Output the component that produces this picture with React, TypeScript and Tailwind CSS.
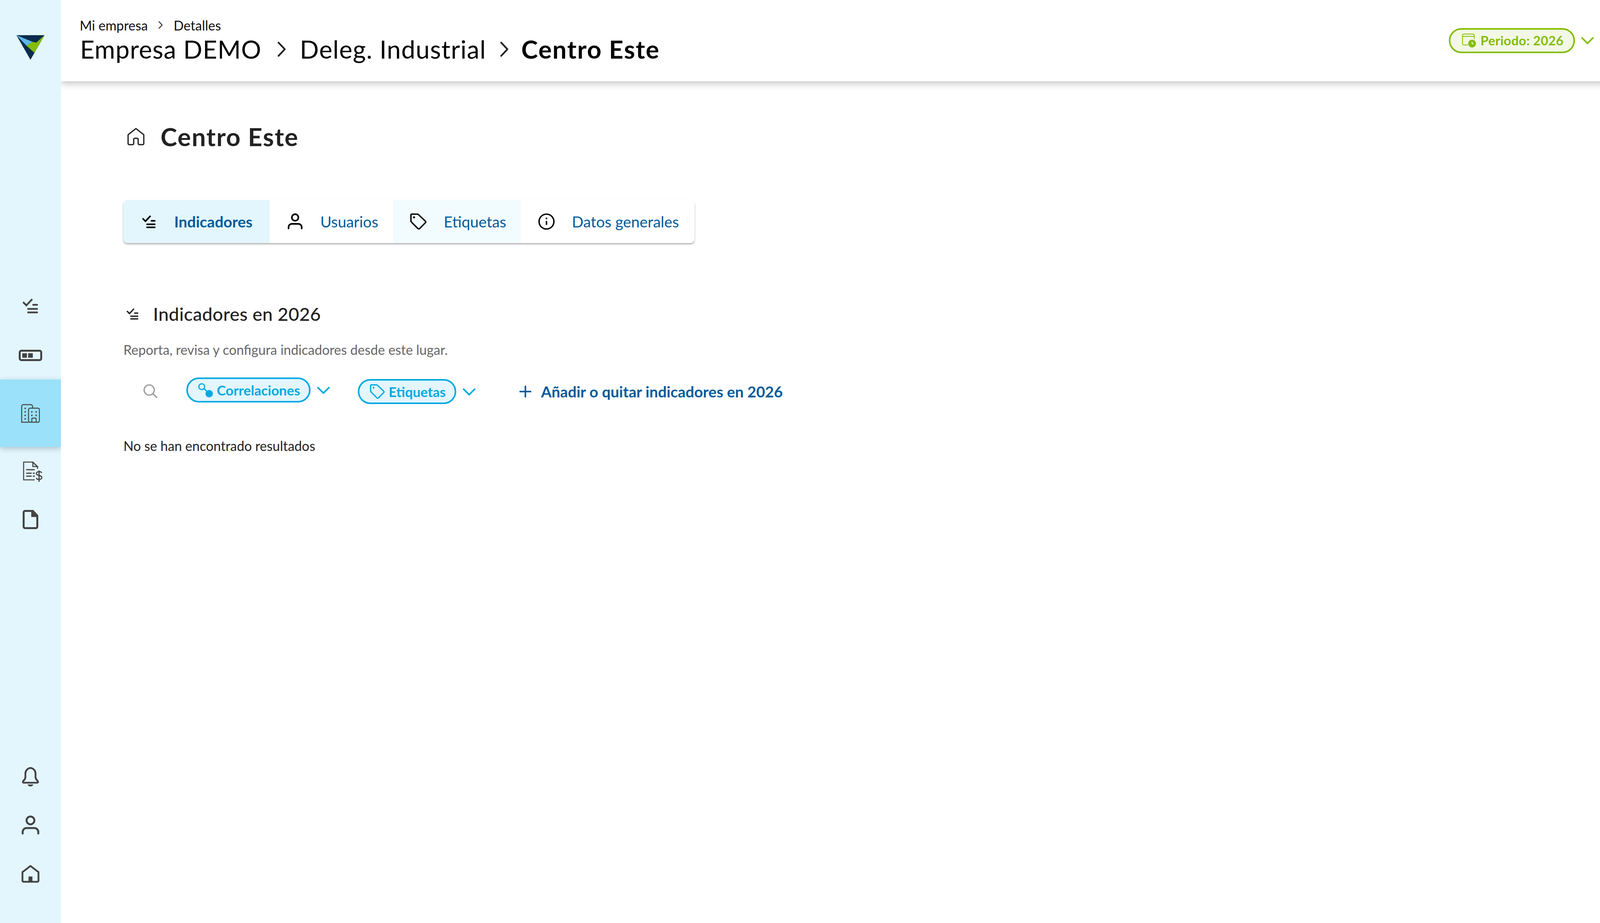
import type { ReactNode } from "react";

type IconProps = { className?: string };

const ChecklistIcon = ({ className }: IconProps) => (
  <svg viewBox="0 0 40 38" className={className} fill="none" stroke="currentColor" strokeWidth="4.6">
    <path d="M1 9l8.500 8.500L24.500 1.500" />
    <path d="M27 16h10M14 26.500h23M14 35.500h23" strokeLinecap="round" />
  </svg>
);

const UserIcon = ({ className }: IconProps) => (
  <svg viewBox="0 0 46 50" className={className} fill="none" stroke="currentColor" strokeWidth="5" strokeLinecap="round">
    <circle cx="23" cy="12.5" r="10" />
    <path d="M3 46v-4a10 10 0 0 1 10-10h20a10 10 0 0 1 10 10v4" />
  </svg>
);

const TagIcon = ({ className }: IconProps) => (
  <svg viewBox="0 0 42 42" className={className} fill="none" stroke="currentColor" strokeWidth="3.6" strokeLinejoin="round">
    <path d="M4 2h15a3 3 0 0 1 2 1l18 17a3 3 0 0 1 0 4L24 39a3 3 0 0 1-4 0L3 22a3 3 0 0 1-1-2V4a2 2 0 0 1 2-2z" />
    <circle cx="10" cy="10" r="2.6" fill="currentColor" stroke="none" />
  </svg>
);

const InfoIcon = ({ className }: IconProps) => (
  <svg viewBox="0 0 42 42" className={className} fill="none" stroke="currentColor" strokeWidth="3.6">
    <circle cx="21" cy="21" r="19" />
    <path d="M21 19.500v10" />
    <circle cx="21" cy="13" r="2.300" fill="currentColor" stroke="none" />
  </svg>
);

const ChevronDown = ({ className }: IconProps) => (
  <svg viewBox="0 0 32 18" className={className} fill="none" stroke="currentColor" strokeWidth="4" strokeLinecap="round" strokeLinejoin="round">
    <path d="M2 2l14 14L30 2" />
  </svg>
);

const ChevronRight = ({ className }: IconProps) => (
  <svg viewBox="0 0 24 40" className={className} fill="none" stroke="currentColor" strokeWidth="4.4" strokeLinecap="round" strokeLinejoin="round">
    <path d="M4 3l16 17L4 37" />
  </svg>
);

const Logo = () => (
  <svg viewBox="0 0 72 63" className="h-[63px] w-[72px]">
    <path d="M0 0h72L36 63z" fill="#0a2d4d" />
    <path d="M0 0l41 17-15 10z" fill="#5cb8e8" />
    <path d="M72 0L51 19l-10-2-15 10 20 18z" fill="#84bd00" />
  </svg>
);

const BarIcon = () => (
  <svg viewBox="0 0 60 29" className="h-[29px] w-[60px]" fill="none">
    <rect x="2.500" y="2.500" width="55" height="24" rx="4" stroke="#444" strokeWidth="5" />
    <path d="M9 9h12v11.500H9zM24 9h12v11.500H24z" fill="#444" />
  </svg>
);

const BuildingIcon = () => (
  <svg viewBox="0 0 48 48" className="h-[48px] w-[48px]" fill="none" stroke="#444" strokeWidth="2.400">
    <path d="M19 46.500H1.500V6A4.500 4.500 0 0 1 6 1.500h18.500A5 5 0 0 1 29.500 7v4" />
    <rect x="19" y="10.500" width="28" height="36" rx="4" />
    <path d="M27.500 46v-8a2 2 0 0 1 2-2h7a2 2 0 0 1 2 2v8" />
    <g fill="#444" stroke="none">
      <circle cx="10.500" cy="11" r="2" />
      <circle cx="10.500" cy="20" r="2" />
      <circle cx="10.500" cy="29" r="2" />
      <circle cx="10.500" cy="38" r="2" />
      <circle cx="27.500" cy="20" r="2" />
      <circle cx="38.500" cy="20" r="2" />
      <circle cx="27.500" cy="29" r="2" />
      <circle cx="38.500" cy="29" r="2" />
    </g>
  </svg>
);

const InvoiceIcon = () => (
  <svg viewBox="0 0 50 52" className="h-[52px] w-[50px]" fill="none" stroke="#444" strokeWidth="2.600">
    <path d="M30 47H1.500V1.500H25L37 13v6" />
    <path d="M25 1.500V13h12z" fill="#444" fillOpacity="0.15" />
    <path d="M8 21h22M8 30h14M25 30h5M8 37.500h14M25 37.500h5" strokeWidth="3" />
    <path d="M48 29c-1-2-3-3-7-3-4 0-7 2-7 5 0 6 14 3 14 10 0 3-3 5-7 5-4 0-6-1-7-4M41 23v29" strokeWidth="3" />
  </svg>
);

const FileIcon = () => (
  <svg viewBox="0 0 40 49" className="h-[49px] w-[40px]" fill="none" stroke="#444" strokeWidth="5" strokeLinejoin="round">
    <path d="M26 2.500H6A3.500 3.500 0 0 0 2.500 6v37A3.500 3.500 0 0 0 6 46.500h28a3.500 3.500 0 0 0 3.500-3.500V15z" />
    <path d="M22 0h5l13 14v4H22z" fill="#444" stroke="none" />
  </svg>
);

const BellIcon = () => (
  <svg viewBox="0 0 46 50" className="h-[50px] w-[46px]" fill="none" stroke="#444" strokeWidth="4.600" strokeLinejoin="round">
    <path d="M23 2c-8 1.500-13 7-13 15v9c0 3-1 5-4 8-3 2-3.500 6 0 6h34c3.500 0 3-4 0-6-3-3-4-5-4-8v-9C36 9 31 3.500 23 2z" />
    <path d="M15.500 44.500h15c-1 3-4 5-7.500 5s-6.500-2-7.500-5z" fill="#444" stroke="none" />
  </svg>
);

const HomeFilledIcon = ({ className }: IconProps) => (
  <svg viewBox="0 0 46 46" className={className} fill="none" stroke="#444" strokeWidth="4.600" strokeLinejoin="round">
    <path d="M23 3L5 17a3 3 0 0 0-2.500 3v20a3 3 0 0 0 3 3.500h35a3 3 0 0 0 3-3.500V20A3 3 0 0 0 41 17z" />
    <path d="M18 30h10v14H18z" fill="#444" stroke="none" />
  </svg>
);

const HomeOutlineIcon = ({ className }: IconProps) => (
  <svg viewBox="0 0 46 48" className={className} fill="none" stroke="currentColor" strokeWidth="3.400" strokeLinejoin="round">
    <path d="M23 2L4 17a3 3 0 0 0-2 3v22a3 3 0 0 0 3 3h9a3 3 0 0 0 3-3V31a3 3 0 0 1 3-3h6a3 3 0 0 1 3 3v11a3 3 0 0 0 3 3h9a3 3 0 0 0 3-3V20a3 3 0 0 0-2-3z" />
  </svg>
);

const SearchIcon = () => (
  <svg viewBox="0 0 38 38" className="h-[38px] w-[38px]" fill="none" stroke="#999" strokeWidth="3.200" strokeLinecap="round">
    <circle cx="16" cy="16" r="13" />
    <path d="M26 26l9 9" />
  </svg>
);

const CorrelationIcon = () => (
  <svg viewBox="0 0 38 37" className="h-[37px] w-[38px]" fill="none" stroke="#00a9e0" strokeWidth="3">
    <circle cx="9.500" cy="9.500" r="7.500" />
    <path d="M15 15l9 7" />
    <circle cx="28.500" cy="27.500" r="9.500" fill="#00a9e0" stroke="none" />
  </svg>
);

const PeriodIcon = () => (
  <svg viewBox="0 0 36 36" className="h-[36px] w-[36px]" fill="none" stroke="#84bd00" strokeWidth="2">
    <path d="M31 14V4.500A3.500 3.500 0 0 0 27.500 1H4.500A3.500 3.500 0 0 0 1 4.500v21A3.500 3.500 0 0 0 4.500 29H15M1 7h30" />
    <circle cx="25.500" cy="25.500" r="10" fill="#84bd00" stroke="none" />
    <path d="M25.500 20.500v5.500h4.500" stroke="#f2f7e6" />
  </svg>
);

const RailItem = ({ children, className }: { children: ReactNode; className: string }) => (
  <div className={`flex items-center justify-center ${className}`}>{children}</div>
);

interface TabProps {
  icon: ReactNode;
  label: string;
  className: string;
}

const Tab = ({ icon, label, className }: TabProps) => (
  <div className={`flex h-full items-center ${className}`}>
    {icon}
    <span>{label}</span>
  </div>
);

export default function App() {
  return (
    <div className="flex h-[2362px] w-[4132px] overflow-hidden bg-white font-['Lato',sans-serif] text-black">
      <aside className="relative z-10 flex h-full w-[156px] shrink-0 flex-col overflow-hidden bg-[#e3f6fe]">
        <RailItem className="mt-[90px] h-[63px]">
          <Logo />
        </RailItem>
        <RailItem className="mt-[611px] h-[38px]">
          <ChecklistIcon className="h-[38px] w-[40px] text-[#444]" />
        </RailItem>
        <RailItem className="mt-[93px] h-[29px]">
          <BarIcon />
        </RailItem>
        <RailItem className="mt-[47px] h-[173px] bg-[#9ae1f9] shadow-[0_4px_14px_rgba(0,0,0,0.22)]">
          <BuildingIcon />
        </RailItem>
        <RailItem className="mt-[37px] h-[52px] pl-[11px]">
          <InvoiceIcon />
        </RailItem>
        <RailItem className="mt-[72px] h-[49px]">
          <FileIcon />
        </RailItem>
        <div className="mt-auto flex flex-col items-center pb-[103px]">
          <BellIcon />
          <UserIcon className="mt-[74px] h-[50px] w-[46px] text-[#444]" />
          <HomeFilledIcon className="mt-[76px] h-[46px] w-[46px]" />
        </div>
      </aside>

      <main className="flex min-w-0 flex-1 flex-col">
        <header className="flex h-[208px] shrink-0 items-start justify-between bg-white pl-[49px] pr-[52px] shadow-[0_5px_18px_rgba(0,0,0,0.26)]">
          <div>
            <div className="ml-[-1px] mt-[42px] flex h-[44px] items-center text-[34px] text-[#111]">
              <span>Mi empresa</span>
              <ChevronRight className="ml-[27px] h-[20px] w-[12px] text-[#222]" />
              <span className="ml-[27px]">Detalles</span>
            </div>
            <div className="mt-[1px] flex h-[78px] items-center text-[64px] leading-none">
              <span className="tracking-[1px]">Empresa DEMO</span>
              <ChevronRight className="ml-[39px] h-[40px] w-[24px] text-[#222]" />
              <span className="ml-[35px] tracking-[1.2px]">Deleg. Industrial</span>
              <ChevronRight className="ml-[34px] h-[40px] w-[24px] text-[#222]" />
              <span className="ml-[32px] font-bold tracking-[2px]">Centro Este</span>
            </div>
          </div>
          <div className="mt-[72px] flex items-center">
            <div className="flex h-[64px] w-[323px] items-center rounded-full border-[4px] border-[#84bd00] bg-[#f2f7e6] pl-[30px] text-[33px] font-bold tracking-[0.4px] text-[#84bd00]">
              <PeriodIcon />
              <span className="ml-[11px]">Periodo: 2026</span>
            </div>
            <ChevronDown className="ml-[16px] h-[18px] w-[32px] text-[#84bd00]" />
          </div>
        </header>

        <section className="pl-[160px] pt-[110px]">
          <div className="flex h-[64px] items-center text-[64px] font-bold leading-none tracking-[1.9px] text-[#222]">
            <HomeOutlineIcon className="ml-[10px] h-[48px] w-[44px]" />
            <span className="ml-[41px]">Centro Este</span>
          </div>

          <div className="mt-[130px] flex h-[110px] w-[1462px] overflow-hidden rounded-[10px] bg-white text-[39px] text-[#005b9a] shadow-[0_3px_4px_rgba(0,0,0,0.32)]">
            <Tab
              className="w-[374px] bg-[#e3f6fe] pl-[48px] font-bold"
              icon={<ChecklistIcon className="mr-[47px] h-[33px] w-[35px] text-black" />}
              label="Indicadores"
            />
            <Tab
              className="w-[316px] pl-[46px]"
              icon={<UserIcon className="mr-[45px] h-[42px] w-[39px] text-black" />}
              label="Usuarios"
            />
            <Tab
              className="w-[327px] bg-[#f2fbfe] pl-[44px]"
              icon={<TagIcon className="mr-[44px] h-[42px] w-[42px] text-black" />}
              label="Etiquetas"
            />
            <Tab
              className="flex-1 pl-[45px]"
              icon={<InfoIcon className="mr-[44px] h-[42px] w-[42px] text-black" />}
              label="Datos generales"
            />
          </div>

          <div className="mt-[156px] flex h-[50px] items-center text-[47px] font-medium tracking-[0.4px] text-[#222]">
            <ChecklistIcon className="ml-[8px] h-[29px] w-[31px]" />
            <span className="ml-[37px]">Indicadores en 2026</span>
          </div>

          <p className="mt-[47px] h-[40px] text-[34px] leading-[40px] text-[#666]">
            Reporta, revisa y configura indicadores desde este lugar.
          </p>

          <div className="mt-[51px] flex h-[68px] items-start">
            <div className="ml-[50px] mt-[16px]">
              <SearchIcon />
            </div>
            <div className="ml-[73px] flex h-[64px] w-[318px] items-center rounded-full border-[4px] border-[#00a9e0] bg-[#e3f6fe] pl-[26px] text-[35px] font-bold text-[#00a9e0]">
              <CorrelationIcon />
              <span className="ml-[10px]">Correlaciones</span>
            </div>
            <ChevronDown className="ml-[17px] mt-[24px] h-[18px] w-[32px] text-[#00a9e0]" />
            <div className="ml-[72px] mt-[4px] flex h-[64px] w-[252px] items-center rounded-full border-[4px] border-[#00a9e0] bg-[#e3f6fe] pl-[27px] text-[35px] font-bold text-[#00a9e0]">
              <TagIcon className="h-[38px] w-[38px]" />
              <span className="ml-[10px]">Etiquetas</span>
            </div>
            <ChevronDown className="ml-[17px] mt-[28px] h-[18px] w-[32px] text-[#00a9e0]" />
            <div className="ml-[113px] mt-[12px] flex h-[48px] items-center text-[39px] font-bold text-[#005b9a]">
              <svg viewBox="0 0 30 30" className="h-[30px] w-[30px]" fill="none" stroke="currentColor" strokeWidth="4">
                <path d="M15 0v30M0 15h30" />
              </svg>
              <span className="ml-[25px]">Añadir o quitar indicadores en 2026</span>
            </div>
          </div>

          <p className="mt-[87px] h-[40px] text-[34px] leading-[40px] text-[#222]">No se han encontrado resultados</p>
        </section>
      </main>
    </div>
  );
}
